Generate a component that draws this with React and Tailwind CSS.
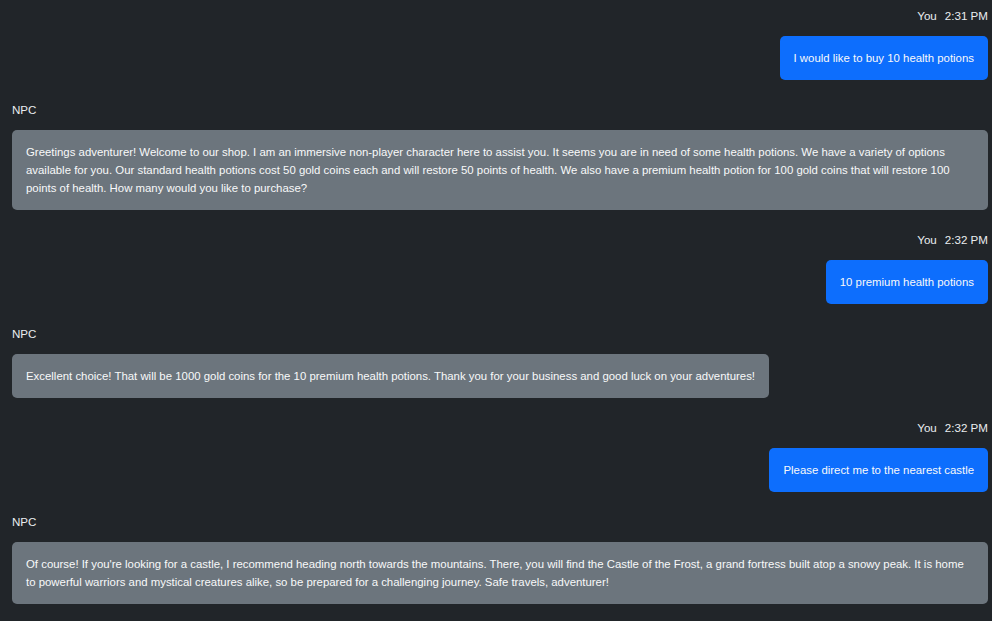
const MESSAGES = [
  { from: 'You', time: '2:31 PM', text: 'I would like to buy 10 health potions' },
  {
    from: 'NPC',
    text: 'Greetings adventurer! Welcome to our shop. I am an immersive non-player character here to assist you. It seems you are in need of some health potions. We have a variety of options available for you. Our standard health potions cost 50 gold coins each and will restore 50 points of health. We also have a premium health potion for 100 gold coins that will restore 100 points of health. How many would you like to purchase?',
  },
  { from: 'You', time: '2:32 PM', text: '10 premium health potions' },
  {
    from: 'NPC',
    text: 'Excellent choice! That will be 1000 gold coins for the 10 premium health potions. Thank you for your business and good luck on your adventures!',
  },
  { from: 'You', time: '2:32 PM', text: 'Please direct me to the nearest castle' },
  {
    from: 'NPC',
    text: "Of course! If you're looking for a castle, I recommend heading north towards the mountains. There, you will find the Castle of the Frost, a grand fortress built atop a snowy peak. It is home to powerful warriors and mystical creatures alike, so be prepared for a challenging journey. Safe travels, adventurer!",
  },
];

const Message = ({ from, time, text }) => {
  const mine = from === 'You';
  return (
    <div className={`flex flex-col ${mine ? 'items-end' : 'items-start'}`}>
      <div className="text-[11.6px] leading-[18px] text-[#e9ecef] mb-[11px]">
        {from}
        {time && <span className="ml-[8px]">{time}</span>}
      </div>
      <div
        className={`rounded-[5px] px-[14px] py-[13px] text-[11.4px] leading-[18px] text-[#f8f9fa] ${
          mine ? 'bg-[#0d6efd]' : 'bg-[#6c757d]'
        }`}
      >
        {text}
      </div>
    </div>
  );
};

export default function App() {
  return (
    <div
      className="min-h-screen bg-[#212529] pl-3 pr-1 pt-[7px] pb-4"
      style={{ fontFamily: "'Liberation Sans', Arial, sans-serif" }}
    >
      <div className="flex flex-col gap-[21px]">
        {MESSAGES.map((m, i) => (
          <Message key={i} {...m} />
        ))}
      </div>
    </div>
  );
}
